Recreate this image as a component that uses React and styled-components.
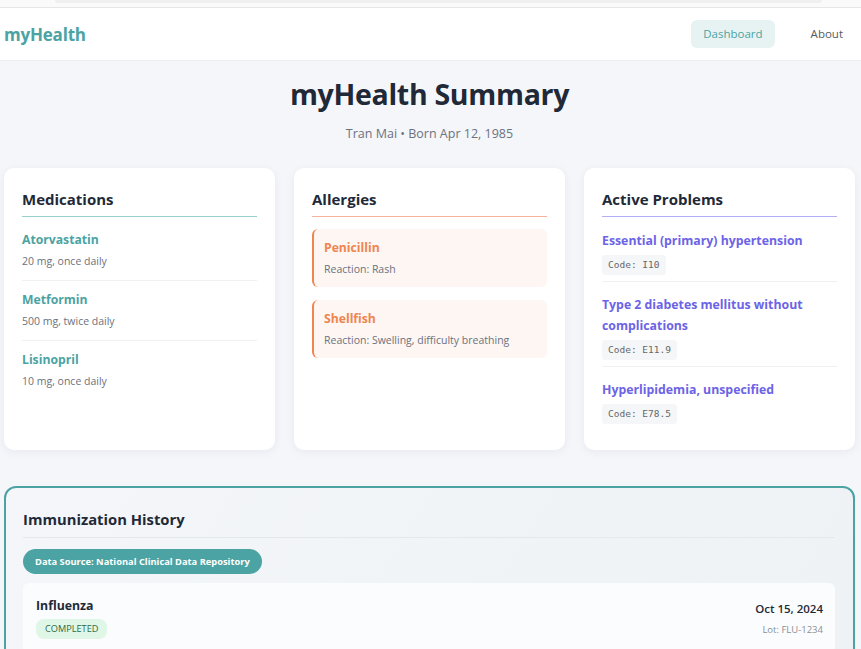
import styled, { createGlobalStyle } from 'styled-components';

const GlobalStyle = createGlobalStyle`
  * { box-sizing: border-box; }
  body {
    margin: 0;
    background: #f5f6fa;
    font-family: "Open Sans", "Noto Sans", sans-serif;
    color: #1f2937;
  }
`

const colors = {
  teal: '#4ba3a3',
  tealSoft: '#98d0cc',
  orange: '#ef8550',
  orangeSoft: '#f6b39c',
  purple: '#6c63e6',
  purpleSoft: '#b3aff7',
  muted: '#6b7280',
  dark: '#1f2937',
};

const TopStrip = styled.div`
  height: 8px;
  background: #fafafa;
  border-bottom: 1px solid #e6e6e6;
  padding: 0 39px 0 55px;
`
const StripBar = styled.div`
  height: 3px;
  background: #efefef;
  border-radius: 0 0 4px 4px;
`
const Header = styled.header`
  background: #fff;
  border-bottom: 1px solid #eceef2;
  height: 53px;
  padding: 0 6px 0 4px;
  display: flex;
  align-items: center;
  justify-content: space-between;
`
const Logo = styled.div`
  color: ${colors.teal};
  font-weight: 700;
  font-size: 17px;
  letter-spacing: -0.2px;
`
const NavList = styled.nav`
  display: flex;
  gap: 24px;
`
const NavLink = styled.a`
  font-size: 11.5px;
  line-height: 16px;
  padding: 6px 12px;
  border-radius: 6px;
  text-decoration: none;
  color: ${(p) => (p.$active ? colors.teal : '#555b63')};
  background: ${(p) => (p.$active ? '#e7f3f3' : 'transparent')};
`
const Main = styled.main`
  padding: 0 6px 40px 4px;
`
const Hero = styled.div`
  text-align: center;
  padding: 14px 0 26px;
`
const Title = styled.h1`
  margin: 0;
  font-size: 28.5px;
  font-weight: 700;
  color: ${colors.dark};
  letter-spacing: -0.3px;
`
const Subtitle = styled.p`
  margin: 12px 0 0;
  font-size: 12.5px;
  color: ${colors.muted};
`
const Grid = styled.div`
  display: grid;
  grid-template-columns: repeat(3, 1fr);
  gap: 19px;
`
const Card = styled.section`
  background: #fff;
  border-radius: 10px;
  box-shadow: 0 2px 10px rgba(30, 40, 70, 0.06);
  padding: 21px 18px 26px;
`
const CardTitle = styled.h2`
  margin: 0 0 4px;
  padding-bottom: 7px;
  font-size: 15px;
  line-height: 20px;
  font-weight: 700;
  color: ${colors.dark};
  border-bottom: 1px solid ${(p) => p.$line};
`
const MedItem = styled.div`
  padding: 10px 0 11px;
  border-bottom: 1px solid #f0f1f3;
  &:last-child { border-bottom: none; }
`
const MedName = styled.div`
  font-size: 12.2px;
  line-height: 18px;
  font-weight: 700;
  color: ${colors.teal};
`
const Detail = styled.div`
  margin-top: 5px;
  font-size: 10.5px;
  line-height: 15px;
  color: ${colors.muted};
`
const AllergyList = styled.div`
  display: flex;
  flex-direction: column;
  gap: 13px;
  padding-top: 8px;
`
const AllergyItem = styled.div`
  background: #fdf6f2;
  border-left: 2px solid ${colors.orange};
  border-radius: 6px;
  padding: 10px 10px 10px;
`
const AllergyName = styled(MedName)`
  color: ${colors.orange};
`
const ProblemItem = styled.div`
  padding: 12px 0 6px;
  border-bottom: 1px solid #f0f1f3;
  &:first-of-type { padding-top: 9px; }
  &:last-child { border-bottom: none; padding-bottom: 0; }
`
const ProblemName = styled.div`
  font-size: 12.3px;
  font-weight: 700;
  line-height: 21px;
  color: ${colors.purple};
`
const Code = styled.div`
  width: fit-content;
  height: 20px;
  margin-top: 4px;
  padding: 0 6px;
  border-radius: 3px;
  background: #f5f6f8;
  font-family: "DejaVu Sans Mono", "Liberation Mono", monospace;
  font-size: 9.5px;
  line-height: 20px;
  color: #666;
`
const Immunization = styled.section`
  margin-top: 36px;
  border: 2px solid ${colors.teal};
  border-radius: 12px;
  background: linear-gradient(120deg, #f4f6f9 0%, #eef2f5 100%);
  padding: 21px 18px 18px 17px;
`
const SectionTitle = styled.h2`
  margin: 0 0 11px;
  padding-bottom: 8px;
  font-size: 14.8px;
  line-height: 20px;
  font-weight: 700;
  color: ${colors.dark};
  border-bottom: 1px solid #e4e8ec;
`
const SourceBadge = styled.div`
  width: fit-content;
  background: ${colors.teal};
  color: #fff;
  font-size: 9.3px;
  line-height: 13px;
  font-weight: 700;
  padding: 6px 12px;
  border-radius: 14px;
`
const ShotCard = styled.div`
  margin-top: 9px;
  background: #fbfcfd;
  border-radius: 6px;
  padding: 14px 12px 14px 13px;
  display: flex;
  justify-content: space-between;
  align-items: flex-start;
`
const ShotName = styled.div`
  font-size: 12.3px;
  line-height: 18px;
  font-weight: 700;
  color: ${colors.dark};
`
const StatusChip = styled.div`
  width: fit-content;
  margin-top: 4px;
  height: 20px;
  padding: 0 9px;
  border-radius: 8px;
  background: #e0f7e7;
  color: #2f6b3f;
  font-size: 9.2px;
  line-height: 20px;
  text-transform: uppercase;
`
const ShotMeta = styled.div`
  text-align: right;
  padding-top: 4px;
`
const ShotDate = styled.div`
  font-size: 11.5px;
  line-height: 16px;
  font-weight: 600;
  color: ${colors.dark};
`
const Lot = styled.div`
  margin-top: 6px;
  font-size: 9.5px;
  color: #8a9099;
`

const meds = [
  { name: 'Atorvastatin', dose: '20 mg, once daily' },
  { name: 'Metformin', dose: '500 mg, twice daily' },
  { name: 'Lisinopril', dose: '10 mg, once daily' },
];
const allergies = [
  { name: 'Penicillin', reaction: 'Rash' },
  { name: 'Shellfish', reaction: 'Swelling, difficulty breathing' },
];
const problems = [
  { name: 'Essential (primary) hypertension', code: 'I10' },
  { name: 'Type 2 diabetes mellitus without complications', code: 'E11.9' },
  { name: 'Hyperlipidemia, unspecified', code: 'E78.5' },
];

const App = () => {
  return (
    <>
      <GlobalStyle />
      <TopStrip><StripBar /></TopStrip>
      <Header>
        <Logo>myHealth</Logo>
        <NavList>
          <NavLink $active href='#'>Dashboard</NavLink>
          <NavLink href='#'>About</NavLink>
        </NavList>
      </Header>
      <Main>
        <Hero>
          <Title>myHealth Summary</Title>
          <Subtitle>Tran Mai • Born Apr 12, 1985</Subtitle>
        </Hero>
        <Grid>
          <Card>
            <CardTitle $line={colors.tealSoft}>Medications</CardTitle>
            {meds.map((m) => (
              <MedItem key={m.name}>
                <MedName>{m.name}</MedName>
                <Detail>{m.dose}</Detail>
              </MedItem>
            ))}
          </Card>
          <Card>
            <CardTitle $line={colors.orangeSoft}>Allergies</CardTitle>
            <AllergyList>
              {allergies.map((a) => (
                <AllergyItem key={a.name}>
                  <AllergyName>{a.name}</AllergyName>
                  <Detail>Reaction: {a.reaction}</Detail>
                </AllergyItem>
              ))}
            </AllergyList>
          </Card>
          <Card>
            <CardTitle $line={colors.purpleSoft}>Active Problems</CardTitle>
            {problems.map((p) => (
              <ProblemItem key={p.code}>
                <ProblemName>{p.name}</ProblemName>
                <Code>Code: {p.code}</Code>
              </ProblemItem>
            ))}
          </Card>
        </Grid>
        <Immunization>
          <SectionTitle>Immunization History</SectionTitle>
          <SourceBadge>Data Source: National Clinical Data Repository</SourceBadge>
          <ShotCard>
            <div>
              <ShotName>Influenza</ShotName>
              <StatusChip>Completed</StatusChip>
            </div>
            <ShotMeta>
              <ShotDate>Oct 15, 2024</ShotDate>
              <Lot>Lot: FLU-1234</Lot>
            </ShotMeta>
          </ShotCard>
        </Immunization>
      </Main>
    </>
  );
};

export default App;
